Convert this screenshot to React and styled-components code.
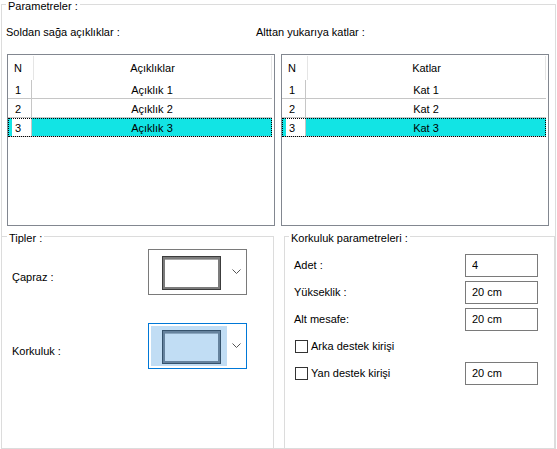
import styled, { createGlobalStyle } from "styled-components";

const GlobalStyle = createGlobalStyle`
	html, body {
		margin: 0;
		padding: 0;
		background: #fff;
	}
	body {
		font-family: "Liberation Sans", Arial, sans-serif;
		font-size: 11px;
		color: #000;
	}
`

const Dialog = styled.div`
	width: 557px;
	height: 449px;
	padding: 4px 0 0 1px;
	box-sizing: border-box;
	display: flex;
	flex-direction: column;
`

const GroupBox = styled.section`
	border: 1px solid #dcdcdc;
	box-sizing: border-box;
	display: flex;
	flex-direction: column;
	min-width: 0;
`

const OuterBox = styled(GroupBox)`
	width: 555px;
	height: 445px;
`

const TypesBox = styled(GroupBox)`
	width: 273px;
`

const RailingBox = styled(GroupBox)`
	flex: 1;
`

const GroupTitle = styled.div`
	align-self: flex-start;
	margin: -5px 0 0 ${props => props.$indent}px;
	padding: 0 2px;
	line-height: 13px;
	background: #fff;
	white-space: nowrap;
`

const CaptionRow = styled.div`
	display: flex;
	margin-top: 13px;
	padding-left: 4px;
	line-height: 13px;
`

const Caption = styled.div`
	width: ${props => props.$width || "auto"};
	white-space: nowrap;
`

const ListRow = styled.div`
	display: flex;
	gap: 6px;
	margin-top: 15px;
	padding-left: 5px;
`

const ListBox = styled.div`
	width: 268px;
	height: 172px;
	box-sizing: border-box;
	border: 1px solid #828790;
	background: #fff;
`

const HeaderRow = styled.div`
	display: flex;
	width: 264px;
	height: 25px;
	line-height: 25px;
`

const HeaderCell = styled.div`
	width: ${props => props.$width}px;
	box-sizing: border-box;
	border-right: 1px solid #e5e5e5;
	padding-left: ${props => props.$center ? 0 : 6}px;
	text-align: ${props => props.$center ? "center" : "left"};
	margin-top: 1px;
	line-height: 24px;
`

const ItemRow = styled.div`
	display: flex;
	width: 264px;
	height: 19px;
	box-sizing: border-box;
	border-bottom: 1px solid #c6c6c6;
	outline: ${props => props.$selected ? "1px dotted #000" : "none"};
	outline-offset: -1px;
`

const IndexCell = styled.div`
	width: 24px;
	box-sizing: border-box;
	border-right: 1px solid #c6c6c6;
	padding: 2px 0 0 7px;
	line-height: 16px;
	background: ${props => props.$selected
		? "linear-gradient(to right, #12e4e4 4px, #fff 4px)"
		: "#fff"};
`

const NameCell = styled.div`
	flex: 1;
	padding-top: 2px;
	line-height: 16px;
	text-align: center;
	background: ${props => props.$selected ? "#12e4e4" : "#fff"};
`

const LowerRow = styled.div`
	flex: 1;
	display: flex;
	gap: 10px;
	margin: 10px 0 -1px -1px;
`

const TypeRow = styled.div`
	display: flex;
	align-items: center;
	margin-top: ${props => props.$gap}px;
	padding-left: 10px;
`

const TypeLabel = styled.div`
	width: 136px;
	margin-top: 11px;
	line-height: 13px;
`

const Combo = styled.div`
	display: flex;
	width: 99px;
	height: 46px;
	box-sizing: border-box;
	padding: 2px 0 2px 2px;
	border: 1px solid ${props => props.$focused ? "#0078d7" : "#7a7a7a"};
	background: #fff;
`

const ComboPreview = styled.div`
	width: 76px;
	box-sizing: border-box;
	padding: 4px 0 0 11px;
	background: ${props => props.$focused ? "#c1ddf4" : "#fff"};
`

const ComboArrow = styled.div`
	flex: 1;
	display: flex;
	align-items: center;
	justify-content: center;
	padding-bottom: 1px;
`

const ParamList = styled.div`
	display: flex;
	flex-direction: column;
	gap: 4px;
	margin-top: 9px;
`

const ParamRow = styled.div`
	display: flex;
	align-items: center;
	height: 23px;
	padding: 0 16px 0 9px;
`

const ParamLabel = styled.label`
	display: flex;
	align-items: center;
	gap: 3px;
	line-height: 13px;
	white-space: nowrap;
`

const CheckBox = styled.input`
	appearance: none;
	width: 13px;
	height: 13px;
	margin: 0 0 0 1px;
	border: 1px solid #333;
	border-radius: 0;
	background: #fff;
`

const ValueInput = styled.input`
	margin-left: auto;
	width: 73px;
	height: 23px;
	box-sizing: border-box;
	padding: 0 0 1px 6px;
	border: 1px solid #7a7a7a;
	border-radius: 0;
	outline: none;
	font: inherit;
	color: #000;
	background: #fff;
`

const spans = ["Açıklık 1", "Açıklık 2", "Açıklık 3"]
const floors = ["Kat 1", "Kat 2", "Kat 3"]

const GridList = ({ title, items, selected }) => (
	<ListBox>
		<HeaderRow>
			<HeaderCell $width={26}>N</HeaderCell>
			<HeaderCell $width={238} $center>{title}</HeaderCell>
		</HeaderRow>
		{items.map((item, i) => (
			<ItemRow key={item} $selected={i === selected}>
				<IndexCell $selected={i === selected}>{i + 1}</IndexCell>
				<NameCell $selected={i === selected}>{item}</NameCell>
			</ItemRow>
		))}
	</ListBox>
)

// framed panel preview shown inside the type pickers
const FramePreview = ({ focused }) => {
	const outer = focused ? "#35526c" : "#3c3c3c"
	const inner = focused ? "#65829d" : "#7c7c7c"
	const fill = focused ? "#c1ddf4" : "#fff"
	return (
		<svg width="59" height="34" viewBox="0 0 59 34">
			<rect x="0.5" y="0.5" width="58" height="33" fill={fill} stroke={outer} />
			<rect x="2" y="2" width="55" height="30" fill="none" stroke={inner} strokeWidth="2" />
			<line x1="3" y1="3.5" x2="56" y2="3.5" stroke={focused ? "#8aa6bf" : "#a8a8a8"} />
		</svg>
	)
}

const Chevron = () => (
	<svg width="9" height="5" viewBox="0 0 9 5">
		<polyline points="0.5,0.5 4.5,4.5 8.5,0.5" fill="none" stroke="#555" />
	</svg>
)

const TypePicker = ({ focused }) => (
	<Combo $focused={focused}>
		<ComboPreview $focused={focused}>
			<FramePreview focused={focused} />
		</ComboPreview>
		<ComboArrow>
			<Chevron />
		</ComboArrow>
	</Combo>
)

const App = () => {
	return (
		<Dialog>
			<GlobalStyle />
			<OuterBox>
				<GroupTitle $indent={4}>Parametreler :</GroupTitle>
				<CaptionRow>
					<Caption $width="250px">Soldan sağa açıklıklar :</Caption>
					<Caption>Alttan yukarıya katlar :</Caption>
				</CaptionRow>
				<ListRow>
					<GridList title="Açıklıklar" items={spans} selected={2} />
					<GridList title="Katlar" items={floors} selected={2} />
				</ListRow>
				<LowerRow>
					<TypesBox>
						<GroupTitle $indent={5}>Tipler :</GroupTitle>
						<TypeRow $gap={4}>
							<TypeLabel>Çapraz :</TypeLabel>
							<TypePicker />
						</TypeRow>
						<TypeRow $gap={28}>
							<TypeLabel>Korkuluk :</TypeLabel>
							<TypePicker focused />
						</TypeRow>
					</TypesBox>
					<RailingBox>
						<GroupTitle $indent={4}>Korkuluk parametreleri :</GroupTitle>
						<ParamList>
							<ParamRow>
								<ParamLabel>Adet :</ParamLabel>
								<ValueInput readOnly value="4" />
							</ParamRow>
							<ParamRow>
								<ParamLabel>Yükseklik :</ParamLabel>
								<ValueInput readOnly value="20 cm" />
							</ParamRow>
							<ParamRow>
								<ParamLabel>Alt mesafe:</ParamLabel>
								<ValueInput readOnly value="20 cm" />
							</ParamRow>
							<ParamRow>
								<ParamLabel>
									<CheckBox type="checkbox" readOnly />
									Arka destek kirişi
								</ParamLabel>
							</ParamRow>
							<ParamRow>
								<ParamLabel>
									<CheckBox type="checkbox" readOnly />
									Yan destek kirişi
								</ParamLabel>
								<ValueInput readOnly value="20 cm" />
							</ParamRow>
						</ParamList>
					</RailingBox>
				</LowerRow>
			</OuterBox>
		</Dialog>
	)
}

export default App
